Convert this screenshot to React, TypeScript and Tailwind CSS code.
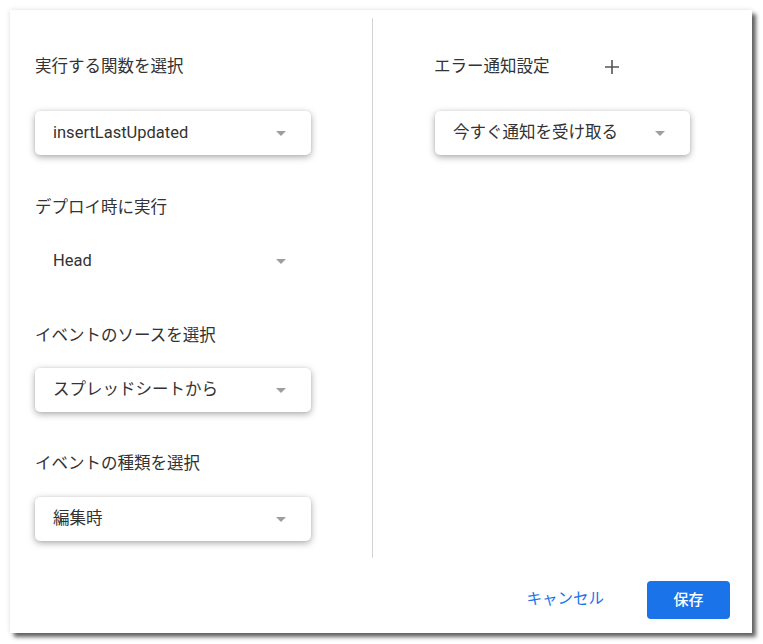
import React from "react";

const font = "font-['Roboto','Noto_Sans_CJK_JP',sans-serif]";

const Arrow = () => (
  <svg width="10" height="5" viewBox="0 0 10 5" className="shrink-0">
    <path d="M0 0 L10 0 L5 5 Z" fill="#9e9e9e" />
  </svg>
);

type SelectProps = { value: string; width: string; flat?: boolean };

const Select: React.FC<SelectProps> = ({ value, width, flat }) => (
  <div
    className={`${width} h-[44px] flex items-center justify-between pl-[18px] pr-[25px] rounded-[5px] ${
      flat ? "" : "bg-white shadow-[0_2px_7px_rgba(0,0,0,0.34),0_0_2px_rgba(0,0,0,0.08)]"
    }`}
  >
    <span className="text-[16.5px] text-[#333]">{value}</span>
    <Arrow />
  </div>
);

const Label: React.FC<{ text: string; className?: string }> = ({ text, className }) => (
  <div className={`text-[16.5px] leading-[24px] text-[#333] ${className ?? ""}`}>{text}</div>
);

const App: React.FC = () => {
  return (
    <div className={`w-[763px] h-[644px] bg-white ${font}`}>
      <div className="relative left-[10px] top-[10px] w-[742px] h-[623px] bg-white flex flex-col shadow-[4px_4px_4px_rgba(0,0,0,0.6),0_0_5px_rgba(0,0,0,0.12)]">
        <div className="mt-[8px] h-[540px] flex">
          {/* left column */}
          <div className="w-[362px] pl-[25px] pt-[37px] flex flex-col">
            <Label text="実行する関数を選択" />
            <div className="mt-[32px]">
              <Select value="insertLastUpdated" width="w-[276px]" />
            </div>
            <Label text="デプロイ時に実行" className="mt-[41px]" />
            <div className="mt-[19px]">
              <Select value="Head" width="w-[276px]" flat />
            </div>
            <Label text="イベントのソースを選択" className="mt-[41px]" />
            <div className="mt-[20px]">
              <Select value="スプレッドシートから" width="w-[276px]" />
            </div>
            <Label text="イベントの種類を選択" className="mt-[40px]" />
            <div className="mt-[21px]">
              <Select value="編集時" width="w-[276px]" />
            </div>
          </div>
          <div className="w-px h-full bg-[#d3d3d3]" />
          {/* right column */}
          <div className="pl-[61px] pt-[37px] flex flex-col">
            <div className="flex items-center h-[24px]">
              <Label text="エラー通知設定" />
              <svg width="16" height="16" viewBox="0 0 16 16" className="ml-[54px]">
                <path d="M8 1 V15 M1 8 H15" stroke="#555" strokeWidth="1.6" />
              </svg>
            </div>
            <div className="mt-[32px] ml-px">
              <Select value="今すぐ通知を受け取る" width="w-[255px]" />
            </div>
          </div>
        </div>
        {/* footer */}
        <div className="mt-[23px] flex items-center justify-end pr-[22px]">
          <button className="text-[15.5px] text-[#1a73e8] mr-[43px]">キャンセル</button>
          <button className="w-[83px] h-[38px] rounded-[4px] bg-[#1a73e8] text-white text-[15px] font-medium">
            保存
          </button>
        </div>
      </div>
    </div>
  );
};

export default App;
